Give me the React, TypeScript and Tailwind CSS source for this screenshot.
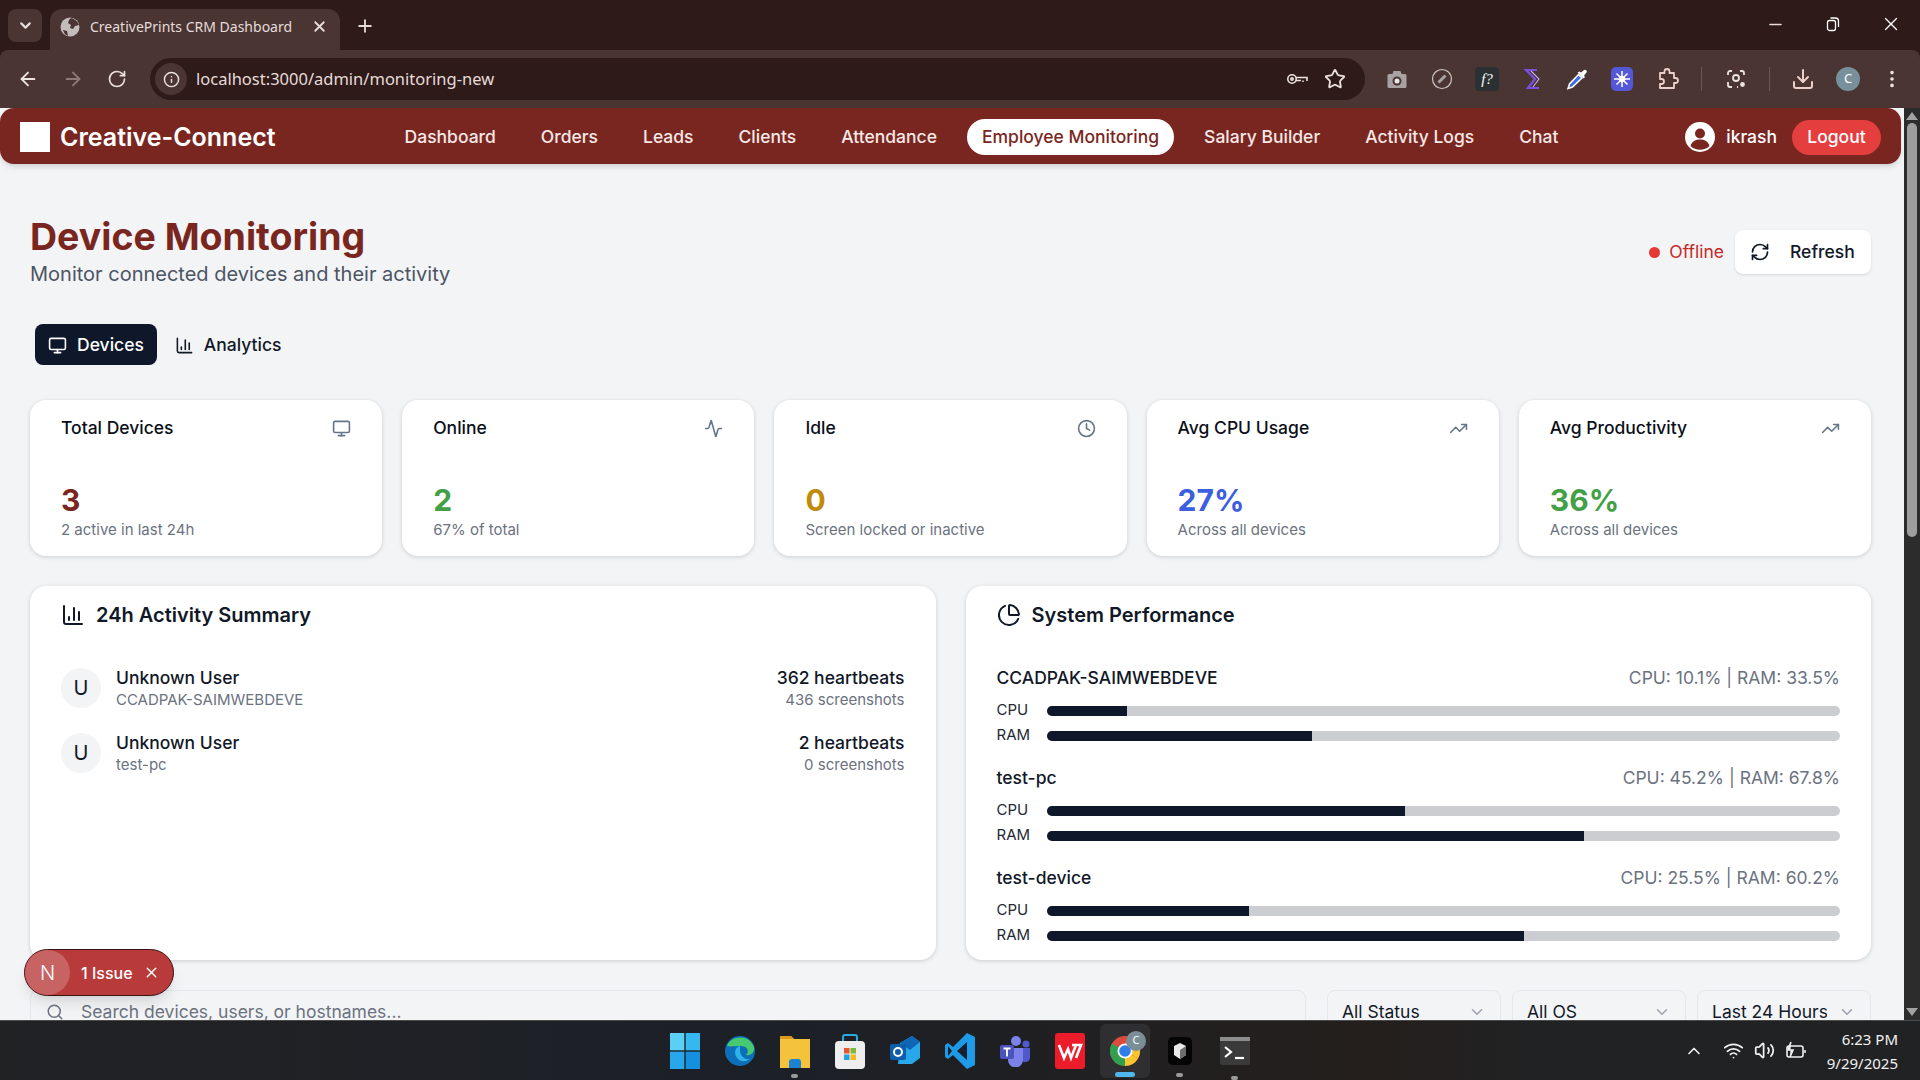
import { Activity, ArrowLeft, ArrowRight, ChartColumn, ChevronDown, ChevronUp, Clock, Download, EllipsisVertical, Info, Minus, Monitor, PieChart, Plus, RefreshCw, RotateCw, Search, Star, TrendingUp, Volume2, Wifi, X } from "lucide-react";

const navItems = ["Dashboard", "Orders", "Leads", "Clients", "Attendance", "Employee Monitoring", "Salary Builder", "Activity Logs", "Chat"];

const statCards = [
    { title: "Total Devices", value: "3", sub: "2 active in last 24h", icon: Monitor, color: "text-[#7a2620]" },
    { title: "Online", value: "2", sub: "67% of total", icon: Activity, color: "text-[#43a047]" },
    { title: "Idle", value: "0", sub: "Screen locked or inactive", icon: Clock, color: "text-[#c28a0a]" },
    { title: "Avg CPU Usage", value: "27%", sub: "Across all devices", icon: TrendingUp, color: "text-[#3b5fe0]" },
    { title: "Avg Productivity", value: "36%", sub: "Across all devices", icon: TrendingUp, color: "text-[#43a047]" },
];

const activity = [
    { host: "CCADPAK-SAIMWEBDEVE", beats: "362 heartbeats", shots: "436 screenshots" },
    { host: "test-pc", beats: "2 heartbeats", shots: "0 screenshots" },
];

const performance = [
    { name: "CCADPAK-SAIMWEBDEVE", cpu: 10.1, ram: 33.5 },
    { name: "test-pc", cpu: 45.2, ram: 67.8 },
    { name: "test-device", cpu: 25.5, ram: 60.2 },
];

function MeterRow({ label, value }: { label: string; value: number }) {
    return (
        <div className="flex h-[25px] items-center">
            <span className="w-[50px] text-[15px] text-[#1f2937]">{label}</span>
            <div className="h-[10px] flex-1 overflow-hidden rounded-full bg-[#cbcdd1]">
                <div className="h-full bg-[#0f172a]" style={{ width: `${value}%` }} />
            </div>
        </div>
    );
}

function KeyIcon() {
    return (
        <svg width="24" height="24" viewBox="0 0 24 24" fill="none" stroke="#ece3e1" strokeWidth="1.6">
            <circle cx="7" cy="12" r="4.2" />
            <circle cx="7" cy="12" r="1.2" />
            <path d="M11 10.5h11v3.5M18 13.5v1.5M11 13.5h5" />
        </svg>
    );
}

function BrowserToolbar() {
    return (
        <div className="flex h-[58px] shrink-0 items-center rounded-t-lg bg-[#4a3533] font-['Noto_Sans',sans-serif] text-[#ece3e1]">
            <div className="ml-[17px] flex w-[133px] items-center gap-[23px]">
                <ArrowLeft size={22} />
                <ArrowRight size={22} className="text-[#8d7a78]" />
                <RotateCw size={20} />
            </div>
            <div className="flex h-[42px] w-[1215px] items-center rounded-full bg-[#2e1a18]">
                <span className="ml-[5px] flex size-[32px] items-center justify-center rounded-full bg-[#4a3533]">
                    <Info size={17} />
                </span>
                <span className="ml-[9px] text-[16.5px] text-[#e6dcda]">localhost:3000/admin/monitoring-new</span>
                <div className="ml-auto mr-[19px] flex items-center gap-[15px]">
                    <KeyIcon />
                    <Star size={22} />
                </div>
            </div>
            <div className="ml-[20px] flex items-center gap-[21px]">
                <svg width="24" height="24" viewBox="0 0 24 24">
                    <path d="M4 7h3.5l1-3h7l1 3H20a1.5 1.5 0 0 1 1.5 1.5v11A1.5 1.5 0 0 1 20 21H4a1.5 1.5 0 0 1-1.5-1.5v-11A1.5 1.5 0 0 1 4 7z" fill="#a8a3a2" />
                    <circle cx="12" cy="14" r="4.5" fill="#4a3533" />
                    <circle cx="12" cy="14" r="2.5" fill="#e8e8e8" />
                </svg>
                <svg width="24" height="24" viewBox="0 0 24 24" fill="none" stroke="#cfc7c5" strokeWidth="1.2">
                    <circle cx="12" cy="12" r="9.5" />
                    <path d="M8.5 15.5l7-7" strokeWidth="3" stroke="#a8a3a2" />
                </svg>
                <span className="flex size-[24px] items-center justify-center rounded-sm bg-[#2b3133] font-['Liberation_Serif',serif] text-[15px] italic leading-none text-white">f?</span>
                <svg width="24" height="24" viewBox="0 0 24 24" fill="none" stroke="#7c4fe0" strokeWidth="2.2">
                    <path d="M17 3H6l9 9-7 9h11" />
                    <path d="M11 4l8 8-6 8" stroke="#c7b2ff" strokeWidth="1.1" />
                </svg>
                <svg width="24" height="24" viewBox="0 0 24 24">
                    <path d="M13.5 7.5l-9 9.5-1.500 4.500 4.500-1.500 9.500-9z" fill="#3f6fe0" stroke="#fff" strokeWidth="1.5" />
                    <path d="M12.5 5.5l6 6 1.500-1.500-1-1.500 2.500-3a1.800 1.800 0 0 0-2.500-2.500l-3 2.500-1.500-1z" fill="#fff" />
                </svg>
                <svg width="24" height="24" viewBox="0 0 24 24">
                    <rect x="1" y="0" width="22" height="24" rx="5" fill="#5457d6" />
                    <path d="M12 4v16M4 12h16M6.500 6.500l11 11M17.500 6.500l-11 11" stroke="#fff" strokeWidth="1.5" />
                    <circle cx="12" cy="12" r="3.2" fill="#fff" />
                </svg>
                <svg width="24" height="24" viewBox="0 0 24 24" fill="none" stroke="#eccfc9" strokeWidth="1.8" strokeLinejoin="round">
                    <path d="M5 6h4.500V4.500a2.500 2.500 0 0 1 5 0V6H19v5h1.500a2.500 2.500 0 0 1 0 5H19v5H5v-4h1.500a2.500 2.500 0 0 0 0-5H5z" />
                </svg>
                <span className="mx-[1px] h-[24px] w-px bg-[#6b5654]" />
                <svg width="24" height="24" viewBox="0 0 24 24" fill="none" stroke="#ece3e1" strokeWidth="1.8">
                    <path d="M4 8V6a2 2 0 0 1 2-2h2M16 4h2a2 2 0 0 1 2 2v2M4 15v3a2 2 0 0 0 2 2h2M13 20h1" />
                    <circle cx="12" cy="11" r="3" />
                    <circle cx="18.5" cy="17.5" r="1.5" fill="#ece3e1" />
                </svg>
                <span className="h-[24px] w-px bg-[#6b5654]" />
                <Download size={24} className="text-[#eccfc9]" />
                <span className="flex size-[24px] items-center justify-center rounded-full bg-[#78909c] text-[13px] text-white">C</span>
                <EllipsisVertical size={22} />
            </div>
        </div>
    );
}

function TabStrip() {
    return (
        <div className="flex h-[50px] shrink-0 items-end bg-[#2e1a18] font-['Noto_Sans',sans-serif] text-[#e6dcda]">
            <span className="mb-[8px] ml-[8px] flex h-[33px] w-[34px] items-center justify-center rounded-lg bg-[#4a3533]">
                <ChevronDown size={17} strokeWidth={3} />
            </span>
            <div className="ml-[8px] flex h-[41px] w-[290px] items-center rounded-t-xl bg-[#4a3533] pb-[6px] pl-[10px] pr-[12px]">
                <svg width="20" height="20" viewBox="0 0 20 20">
                    <circle cx="10" cy="10" r="9.5" fill="#c2bcbb" />
                    <path d="M11 1c4 1 7 4 8 7l-4 1-2 3-3-1 1-3-3-2 1-3zM3 13l4 1 1 5c-3-1-4-3-5-6z" fill="#4a3533" />
                </svg>
                <span className="ml-[10px] text-[14px]">CreativePrints CRM Dashboard</span>
                <X size={17} strokeWidth={2.6} className="ml-auto" />
            </div>
            <Plus size={20} strokeWidth={2.2} className="mb-[14px] ml-[15px]" />
            <div className="mb-[15px] ml-auto flex items-center">
                <span className="flex w-[58px] justify-center"><Minus size={19} /></span>
                <span className="flex w-[58px] justify-center">
                    <svg width="16" height="16" viewBox="0 0 16 16" fill="none" stroke="#fff" strokeWidth="1.3">
                        <rect x="2.5" y="4.5" width="8" height="10" rx="2" />
                        <path d="M5.5 2h5a3 3 0 0 1 3 3v6" />
                    </svg>
                </span>
                <span className="flex w-[58px] justify-center"><X size={22} strokeWidth={1.5} className="text-white" /></span>
            </div>
        </div>
    );
}

function AppNavbar() {
    return (
        <header className="flex h-[56px] w-[1901px] shrink-0 items-center rounded-[14px] bg-[#7a2620] px-[20px] pt-[2px] text-white shadow-md">
            <span className="size-[30px] bg-white" />
            <span className="ml-[10px] text-[25px] font-semibold leading-none">Creative-Connect</span>
            <nav className="ml-[114px] flex items-center gap-[15px]">
                {navItems.map((item) =>
                    item === "Employee Monitoring" ? (
                        <a key={item} className="rounded-full bg-white px-[15px] py-[5px] text-[17.5px] font-medium text-[#7a2620]">{item}</a>
                    ) : (
                        <a key={item} className="px-[15px] py-[5px] text-[17.5px] font-medium text-[#f6e8e6]">{item}</a>
                    )
                )}
            </nav>
            <div className="ml-auto flex items-center">
                <svg width="30" height="30" viewBox="0 0 30 30">
                    <circle cx="15" cy="15" r="15" fill="#fff" />
                    <circle cx="15" cy="11.5" r="5" fill="#7a2620" />
                    <path d="M5.5 24c1.500-5 5-6.500 9.500-6.500s8 1.500 9.500 6.500a14 14 0 0 1-19 0z" fill="#7a2620" />
                </svg>
                <span className="ml-[11px] text-[17.5px] font-medium">ikrash</span>
                <button className="ml-[15px] h-[35px] w-[89px] rounded-full bg-[#e53e3e] text-[17.5px] font-medium">Logout</button>
            </div>
        </header>
    );
}

function MonitoringPage() {
    return (
        <main className="relative min-w-0 flex-1 overflow-hidden bg-[#f3f4f6] font-['Inter',sans-serif]">
            <AppNavbar />
            <div className="pl-[30px] pr-[33px]">
                <div className="mt-[50px] flex items-start justify-between">
                    <div>
                        <h1 className="text-[37.5px] font-bold leading-[46px] text-[#7a2620]">Device Monitoring</h1>
                        <p className="text-[20px] leading-[28px] text-[#4b5563]">Monitor connected devices and their activity</p>
                    </div>
                    <div className="mt-[16px] flex items-center">
                        <span className="size-[11px] rounded-full bg-[#e53935]" />
                        <span className="ml-[9px] text-[17.5px] text-[#c62828]">Offline</span>
                        <button className="ml-[11px] flex h-[44px] w-[136px] items-center rounded-lg bg-white pl-[15px] text-[17.5px] font-medium text-[#111827] shadow-sm">
                            <RefreshCw size={20} />
                            <span className="ml-[20px]">Refresh</span>
                        </button>
                    </div>
                </div>

                <div className="ml-[5px] mt-[36px] flex items-center gap-[4px]">
                    <button className="flex h-[41px] items-center gap-[10px] rounded-lg bg-[#0f172a] px-[13px] pt-[1px] text-[17.5px] font-medium text-white">
                        <Monitor size={19} />
                        Devices
                    </button>
                    <button className="flex h-[41px] items-center gap-[10px] px-[14px] pt-[1px] text-[17.5px] font-medium text-[#111827]">
                        <ChartColumn size={19} />
                        Analytics
                    </button>
                </div>

                <div className="mt-[35px] grid grid-cols-5 gap-[20px]">
                    {statCards.map((card) => {
                        const Icon = card.icon;
                        return (
                            <div key={card.title} className="h-[156px] rounded-2xl bg-white px-[31px] pt-[16px] shadow-[0_1px_4px_rgba(0,0,0,0.16)]">
                                <div className="flex items-center justify-between">
                                    <span className="text-[17.5px] font-medium leading-[24px] text-[#0b0f19]">{card.title}</span>
                                    <Icon size={19} className="text-[#64748b]" />
                                </div>
                                <div className={`mt-[41px] text-[30px] font-bold leading-[38px] ${card.color}`}>{card.value}</div>
                                <div className="text-[15px] leading-[22px] text-[#6b7280]">{card.sub}</div>
                            </div>
                        );
                    })}
                </div>

                <div className="mt-[30px] grid grid-cols-2 gap-[30px]">
                    <section className="h-[374px] rounded-2xl bg-white px-[31px] pt-[15px] shadow-[0_1px_4px_rgba(0,0,0,0.16)]">
                        <div className="flex items-center gap-[11px]">
                            <ChartColumn size={24} className="text-[#111827]" />
                            <h2 className="text-[20px] font-semibold leading-[28px] text-[#111827]">24h Activity Summary</h2>
                        </div>
                        <div className="mt-[39px] flex flex-col gap-[25px]">
                            {activity.map((row) => (
                                <div key={row.host} className="flex h-[40px] items-center">
                                    <span className="flex size-[40px] items-center justify-center rounded-full bg-[#f3f4f6] text-[20px] text-[#111827]">U</span>
                                    <div className="ml-[15px]">
                                        <div className="text-[17.5px] font-medium leading-[24px] text-[#111827]">Unknown User</div>
                                        <div className="text-[15px] leading-[20px] text-[#6b7280]">{row.host}</div>
                                    </div>
                                    <div className="ml-auto text-right">
                                        <div className="text-[17.5px] font-medium leading-[24px] text-[#111827]">{row.beats}</div>
                                        <div className="text-[15px] leading-[20px] text-[#6b7280]">{row.shots}</div>
                                    </div>
                                </div>
                            ))}
                        </div>
                    </section>

                    <section className="h-[374px] rounded-2xl bg-white px-[31px] pt-[15px] shadow-[0_1px_4px_rgba(0,0,0,0.16)]">
                        <div className="flex items-center gap-[11px]">
                            <PieChart size={24} className="text-[#111827]" />
                            <h2 className="text-[20px] font-semibold leading-[28px] text-[#111827]">System Performance</h2>
                        </div>
                        <div className="mt-[36px] flex flex-col gap-[17px]">
                            {performance.map((device) => (
                                <div key={device.name}>
                                    <div className="flex h-[26px] items-center justify-between">
                                        <span className="text-[17.5px] font-medium text-[#111827]">{device.name}</span>
                                        <span className="text-[17.5px] text-[#6b7280]">CPU: {device.cpu}% | RAM: {device.ram}%</span>
                                    </div>
                                    <div className="mt-[7px]">
                                        <MeterRow label="CPU" value={device.cpu} />
                                        <MeterRow label="RAM" value={device.ram} />
                                    </div>
                                </div>
                            ))}
                        </div>
                    </section>
                </div>

                <div className="mt-[30px] flex items-start gap-[21px]">
                    <div className="flex h-[44px] flex-1 items-center rounded-lg border border-[#e5e7eb] pl-[15px]">
                        <Search size={18} className="text-[#6b7280]" />
                        <span className="ml-[17px] text-[17.5px] text-[#6b7280]">Search devices, users, or hostnames...</span>
                    </div>
                    <div className="flex gap-[11px]">
                        {["All Status", "All OS", "Last 24 Hours"].map((label) => (
                            <div key={label} className="flex h-[44px] w-[174px] items-center justify-between rounded-lg border border-[#e5e7eb] px-[14px] text-[17.5px] text-[#111827]">
                                <span className="w-[115px] overflow-hidden whitespace-nowrap">{label}</span>
                                <ChevronDown size={18} className="text-[#9ca3af]" />
                            </div>
                        ))}
                    </div>
                </div>
            </div>

            {/* dev overlay pill */}
            <div className="absolute left-[24px] top-[841px] flex h-[47px] w-[150px] items-center rounded-full border border-[#3a1414] bg-[#b83a3a] text-white shadow-lg">
                <span className="flex size-[45px] items-center justify-center rounded-full bg-[#c86363] text-[20px] font-light">N</span>
                <span className="ml-[11px] text-[16px] font-medium">1 Issue</span>
                <X size={17} className="ml-[10px]" />
            </div>
        </main>
    );
}

function Scrollbar() {
    return (
        <div className="flex w-[16px] shrink-0 flex-col items-center bg-[#2c2c2c]">
            <span className="mt-[4px] size-0 border-x-[6px] border-b-[8px] border-x-transparent border-b-[#a3a3a3]" />
            <span className="mt-[3px] h-[414px] w-[10px] rounded-full bg-[#9e9e9e]" />
            <span className="mb-[4px] mt-auto size-0 border-x-[6px] border-t-[8px] border-x-transparent border-t-[#a3a3a3]" />
        </div>
    );
}

function TaskbarIcons() {
    return (
        <div className="flex items-center gap-[25px]">
            <svg width="30" height="36" viewBox="0 0 30 36">
                <rect x="0" y="0" width="14.3" height="17.3" fill="#5ad0f5" />
                <rect x="15.7" y="0" width="14.3" height="17.3" fill="#35b8f0" />
                <rect x="0" y="18.7" width="14.3" height="17.3" fill="#28a8ea" />
                <rect x="15.7" y="18.7" width="14.3" height="17.3" fill="#1490df" />
            </svg>
            <svg width="30" height="36" viewBox="0 0 30 36">
                <circle cx="15" cy="18" r="15" fill="#0c6fb8" />
                <path d="M2 13C5 3 24 0 29 14c1 5-3 9-8 8 4-4 1-9-5-9-6 0-11 1-14 0z" fill="#46c96f" />
                <path d="M15 13c-5 1-7 8-2 13 3 3 8 3 12 0-5 1-11-2-10-13z" fill="#2fb3e8" />
            </svg>
            <div className="relative">
                <svg width="30" height="36" viewBox="0 0 30 36">
                    <path d="M0 3h11l3 3h16v29H0z" fill="#f5c33b" />
                    <path d="M0 3h11l3 3h-14z" fill="#d99a1c" />
                    <path d="M9 35v-6a3 3 0 0 1 3-3h6a3 3 0 0 1 3 3v6z" fill="#1b83d4" />
                </svg>
                <span className="absolute -bottom-[9px] left-[11px] h-[4px] w-[7px] rounded-full bg-[#9a9a9a]" />
            </div>
            <svg width="30" height="36" viewBox="0 0 30 36">
                <path d="M8 10V4a2 2 0 0 1 2-2h10a2 2 0 0 1 2 2v6" fill="none" stroke="#2aa8e0" strokeWidth="2" />
                <rect x="0" y="8" width="30" height="28" rx="4" fill="#efeeee" />
                <rect x="9" y="15" width="5.5" height="5.5" fill="#e8552e" />
                <rect x="15.5" y="15" width="5.5" height="5.5" fill="#7db93a" />
                <rect x="9" y="21.5" width="5.5" height="5.5" fill="#26a0e0" />
                <rect x="15.5" y="21.5" width="5.5" height="5.5" fill="#f5b91f" />
            </svg>
            <svg width="30" height="30" viewBox="0 0 30 30">
                <path d="M10 7l12-7 8 6v16l-8 6H8z" fill="#28a8ea" />
                <path d="M10 7l12-7 8 6-10 8z" fill="#1066b5" />
                <rect x="0" y="8" width="16" height="16" rx="2" fill="#0f5eab" />
                <circle cx="8" cy="16" r="4" fill="none" stroke="#fff" strokeWidth="2" />
            </svg>
            <svg width="30" height="36" viewBox="0 0 30 36">
                <path d="M22 0l8 4v28l-8 4-14-14-5 4-3-2V12l3-2 5 4z" fill="#1e9be8" />
                <path d="M22 9L12 18l10 9z" fill="#17202e" />
                <path d="M3 13l4 5-4 5z" fill="#17202e" />
            </svg>
            <svg width="30" height="32" viewBox="0 0 30 32">
                <circle cx="16" cy="6" r="5" fill="#7b83eb" />
                <circle cx="26" cy="9" r="3.5" fill="#5059c9" />
                <path d="M21 13h9v10a5 5 0 0 1-9 2z" fill="#5059c9" />
                <path d="M8 13h15v12a7.5 7.5 0 0 1-15 0z" fill="#7b83eb" />
                <rect x="0" y="10" width="14" height="14" rx="2" fill="#4b53bc" />
                <path d="M3.5 13.5h7M7 13.5v8" stroke="#fff" strokeWidth="1.8" />
            </svg>
            <svg width="30" height="36" viewBox="0 0 30 36">
                <rect x="0" y="0" width="30" height="36" rx="3" fill="#ec1c2b" />
                <path d="M4 12l5 13 4-9 3 9 5-13M17 12h9l-5 13" fill="none" stroke="#fff" strokeWidth="2.6" />
            </svg>
            <div className="relative">
                <span className="absolute -inset-x-[10px] -bottom-[12px] -top-[12px] rounded-md bg-[#2f2e30]" />
                <svg width="30" height="30" viewBox="0 0 30 30" className="relative">
                    <circle cx="15" cy="15" r="15" fill="#dd4b3e" />
                    <path d="M15 15L2 22.5A15 15 0 0 0 15 30z" fill="#2fa04f" />
                    <path d="M2 7.5A15 15 0 0 0 2 22.5L15 15z" fill="#2fa04f" />
                    <path d="M15 15L28 22.5A15 15 0 0 0 28 7.5H15z" fill="#f7c52f" />
                    <path d="M15 15l13 7.5A15 15 0 0 1 15 30z" fill="#f7c52f" />
                    <circle cx="15" cy="15" r="7.5" fill="#fff" />
                    <circle cx="15" cy="15" r="5.8" fill="#2f7de8" />
                </svg>
                <span className="absolute -right-[6px] -top-[5px] flex size-[20px] items-center justify-center rounded-full bg-[#7a8e98] text-[11px] text-white">C</span>
                <span className="absolute -bottom-[11px] left-[5px] h-[5px] w-[20px] rounded-full bg-[#4fb6ee]" />
            </div>
            <div className="relative">
                <svg width="30" height="30" viewBox="0 0 30 30">
                    <rect x="3" y="1" width="24" height="28" rx="5" fill="#050505" />
                    <path d="M15 7l6 3v9l-6 4-6-4v-9z" fill="#e9e9e9" />
                    <path d="M15 14l6-4v9l-6 4z" fill="#6d6d6d" />
                </svg>
                <span className="absolute -bottom-[11px] left-[11px] h-[4px] w-[7px] rounded-full bg-[#9a9a9a]" />
            </div>
            <div className="relative">
                <svg width="30" height="28" viewBox="0 0 30 28">
                    <rect width="30" height="28" rx="2" fill="#3a3a3a" />
                    <rect width="30" height="4" fill="#8d8d8d" />
                    <path d="M5 10l6 5-6 5" fill="none" stroke="#fff" strokeWidth="2.2" />
                    <path d="M15 21h9" stroke="#fff" strokeWidth="2.2" />
                </svg>
                <span className="absolute -bottom-[15px] left-[11px] h-[4px] w-[7px] rounded-full bg-[#9a9a9a]" />
            </div>
        </div>
    );
}

function Taskbar() {
    return (
        <footer className="grid h-[60px] shrink-0 grid-cols-[1fr_auto_1fr] items-center border-t border-[#4b4b4b] bg-[linear-gradient(90deg,#212224_0%,#1c2027_40%,#241f1c_72%,#212224_80%)] text-[#f1f1f1]">
            <span />
            <TaskbarIcons />
            <div className="flex items-center justify-end pr-[22px] font-['Noto_Sans',sans-serif]">
                <ChevronUp size={20} />
                <Wifi size={21} className="ml-[19px]" />
                <Volume2 size={21} className="ml-[10px]" />
                <svg width="24" height="24" viewBox="0 0 24 24" fill="none" stroke="#f1f1f1" strokeWidth="1.6" className="ml-[8px]">
                    <rect x="4" y="7" width="16" height="11" rx="2" />
                    <path d="M22 11v3" />
                    <path d="M8 3L5 11h5l-3 7" fill="#f1f1f1" />
                </svg>
                <div className="ml-[20px] text-right text-[15px] leading-[24px]">
                    <div>6:23 PM</div>
                    <div>9/29/2025</div>
                </div>
            </div>
        </footer>
    );
}

export default function App() {
    return (
        <div className="flex h-screen w-full flex-col overflow-hidden bg-[#2e1a18]">
            <TabStrip />
            <BrowserToolbar />
            <div className="flex min-h-0 flex-1">
                <MonitoringPage />
                <Scrollbar />
            </div>
            <Taskbar />
        </div>
    );
}
